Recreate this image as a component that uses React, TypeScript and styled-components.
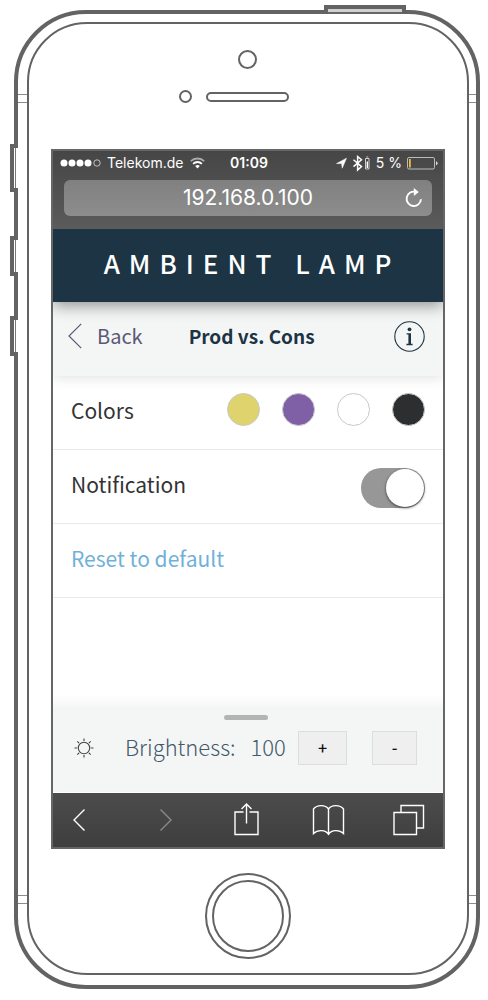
import React, { useState } from "react";
import styled, { createGlobalStyle } from "styled-components";

const line = "#636363";
const sans = `"Noto Sans CJK SC", "Noto Sans", sans-serif`;
const system = `Inter, "Liberation Sans", sans-serif`;

const GlobalStyle = createGlobalStyle`
  * { box-sizing: border-box; }
  body { margin: 0; background: #fff; font-family: ${sans}; }
  button, input { font: inherit; margin: 0; }
`;

const Phone = styled.div`
  position: relative;
  margin: 10px 8px 11px 14px;
  padding: 8px 7px 10px 9px;
  border: 4px solid ${line};
  border-radius: 72px;
  background: #fff;
`;

const Face = styled.div`
  border: 2px solid ${line};
  border-radius: 60px;
`;

const SideKey = styled.span<{ $top: number; $height: number }>`
  position: absolute;
  left: -8px;
  top: ${(p) => p.$top}px;
  width: 8px;
  height: ${(p) => p.$height}px;
  border: 4px solid ${line};
  border-right: 0;
  background: linear-gradient(90deg, #fff 1px, #777 1px, #777 2px, #fff 2px);
  background-clip: padding-box;
`;

const PowerKey = styled.span`
  position: absolute;
  right: 70px;
  top: -9px;
  width: 82px;
  height: 9px;
  border: 4px solid ${line};
  border-bottom: 0;
  background: linear-gradient(#d0d0d0 3px, #666 3px);
  background-clip: padding-box;
`;

const Band = styled.span<{ $side: "left" | "right"; $low?: boolean }>`
  position: absolute;
  ${(p) => p.$side}: 0;
  ${(p) => (p.$low ? "bottom: 81px" : "top: 80px")};
  width: ${(p) => (p.$side === "left" ? 9 : 7)}px;
  height: 9px;
  border: solid #8a8a8a;
  border-width: 1px 0;
`;

const Forehead = styled.div`
  display: flex;
  flex-direction: column;
  align-items: center;
  height: 125px;
  padding: 26px 2px 0 0;
`;

const Camera = styled.span`
  width: 19px;
  height: 19px;
  border: 2px solid ${line};
  border-radius: 50%;
`;

const Earpiece = styled.div`
  display: grid;
  grid-template-columns: 1fr auto 1fr;
  align-items: center;
  width: 100%;
  margin-top: 21px;
`;

const Sensor = styled.span`
  justify-self: end;
  width: 13px;
  height: 13px;
  margin-right: 14px;
  border: 2px solid ${line};
  border-radius: 50%;
`;

const Speaker = styled.span`
  width: 83px;
  height: 10px;
  border: 2px solid ${line};
  border-radius: 5px;
`;

const Chin = styled.div`
  display: flex;
  justify-content: center;
  padding: 24px 0 14px;
`;

const HomeButton = styled.button`
  display: flex;
  width: 86px;
  height: 86px;
  padding: 5px;
  border: 2px solid ${line};
  border-radius: 50%;
  background: #fff;
  &::before {
    content: "";
    flex: 1;
    align-self: stretch;
    border: 2px solid ${line};
    border-radius: 50%;
  }
`;

const Screen = styled.div`
  display: flex;
  flex-direction: column;
  margin: 0 22px;
  border: 2px solid #666;
  background: #fff;
`;

const Browser = styled.div`
  padding: 0 11px 13px;
  background: linear-gradient(#464646, #5b5b5b);
  color: #fff;
  font-family: ${system};
`;

const StatusBar = styled.div`
  display: grid;
  grid-template-columns: 1fr auto 1fr;
  align-items: center;
  height: 24px;
  margin: 0 -6px 5px -4px;
  font-size: 14px;
  line-height: 24px;
`;

const StatusGroup = styled.div<{ $end?: boolean }>`
  display: flex;
  align-items: center;
  justify-content: ${(p) => (p.$end ? "flex-end" : "flex-start")};
  gap: ${(p) => (p.$end ? 5 : 7)}px;
  white-space: nowrap;
`;

const Clock = styled.span`
  font-weight: 600;
`;

const AddressBar = styled.div`
  display: grid;
  grid-template-columns: 36px 1fr 36px;
  align-items: center;
  height: 36px;
  border-radius: 6px;
  background: linear-gradient(#808080, #8d8d8d);
`;

const Address = styled.input`
  grid-column: 2;
  min-width: 0;
  width: 100%;
  padding: 0;
  border: 0;
  background: none;
  color: #fff;
  font-size: 21px;
  line-height: 24px;
  text-align: center;
  outline: 0;
`;

const PlainButton = styled.button`
  display: flex;
  align-items: center;
  justify-content: center;
  padding: 0;
  border: 0;
  background: none;
  color: inherit;
`;

const Brand = styled.header`
  position: relative;
  z-index: 2;
  display: flex;
  align-items: center;
  justify-content: center;
  height: 73px;
  padding-bottom: 6px;
  background: #1c3444;
  box-shadow: 0 4px 14px rgba(0, 0, 0, 0.4);
  clip-path: inset(0 0 -30px 0);
`;

const BrandName = styled.h1`
  margin: 0;
  padding-left: 8px;
  color: #fff;
  font-size: 26px;
  font-weight: 500;
  line-height: 36px;
  letter-spacing: 9px;
  white-space: nowrap;
`;

const SubHeader = styled.nav`
  display: flex;
  align-items: center;
  height: 74px;
  padding: 0 18px 6px 15px;
  background: #f4f6f6;
  box-shadow: 0 2px 12px rgba(0, 0, 0, 0.12);
  clip-path: inset(0 0 -20px 0);
`;

const BackLink = styled.a`
  display: flex;
  align-items: center;
  gap: 15px;
  color: #5b5876;
  font-size: 20px;
  font-weight: 400;
  line-height: 30px;
  text-decoration: none;
`;

const PageTitle = styled.h2`
  margin: 0 auto 0 46px;
  color: #1c3444;
  font-size: 19px;
  font-weight: 700;
  line-height: 30px;
  white-space: nowrap;
`;

const Row = styled.div`
  display: flex;
  align-items: center;
  justify-content: space-between;
  height: 74px;
  padding: 0 18px 6px;
  border-bottom: 1px solid #e9e9e9;
  color: #333;
  font-size: 21px;
  line-height: 30px;
`;

const Swatches = styled.div`
  display: flex;
  gap: 22px;
`;

const Swatch = styled.button<{ $color: string }>`
  width: 33px;
  height: 33px;
  padding: 0;
  border: 1px solid #c9c9c9;
  border-radius: 50%;
  background: ${(p) => p.$color};
`;

const Toggle = styled.input`
  appearance: none;
  display: flex;
  width: 64px;
  height: 40px;
  margin-top: 8px;
  padding: 1px;
  border-radius: 20px;
  background: #979797;
  &::before {
    content: "";
    width: 38px;
    height: 38px;
    border-radius: 50%;
    background: #fff;
    box-shadow: 0 1px 3px rgba(0, 0, 0, 0.6);
  }
  &:checked::before {
    margin-left: auto;
  }
`;

const ResetLink = styled.a`
  color: #70b1d9;
  text-decoration: none;
`;

const Filler = styled.div`
  flex: 1;
  min-height: 109px;
  background: linear-gradient(#fff, #fff calc(100% - 12px), #f6f6f6);
`;

const Panel = styled.section`
  display: flex;
  flex-direction: column;
  align-items: center;
  height: 86px;
  padding: 8px 26px 0 21px;
  border-bottom: 1px solid #fff;
  background: #f4f6f6;
`;

const Handle = styled.span`
  width: 44px;
  height: 5px;
  border-radius: 3px;
  background: #b3b5b5;
`;

const BrightnessRow = styled.div`
  display: flex;
  align-items: center;
  width: 100%;
  margin-top: 11px;
  color: #43596b;
  font-size: 22px;
  font-weight: 300;
  line-height: 30px;
`;

const BrightnessText = styled.output`
  display: flex;
  gap: 15px;
  margin: 0 auto 0 31px;
  padding-bottom: 4px;
`;

const StepButton = styled.button<{ $width: number }>`
  width: ${(p) => p.$width}px;
  height: 34px;
  padding: 0 0 3px;
  border: 1px solid #dcdddd;
  background: #efefef;
  color: #111;
  font-size: 16px;
  font-weight: 500;
  line-height: 30px;
  & + & {
    margin-left: 25px;
  }
`;

const Toolbar = styled.footer`
  display: flex;
  align-items: center;
  justify-content: space-between;
  height: 54px;
  padding: 0 18px 0 11px;
  background: linear-gradient(#4c4c4c, #3e3e3e);
  color: #fff;
`;

const Signal = () => (
  <svg width="40" height="8" viewBox="0 0 40 8" overflow="visible" fill="#fff">
    {[4, 12, 20, 28].map((x) => (
      <circle key={x} cx={x} cy="4" r="3.5" />
    ))}
    <circle cx="37" cy="4" r="3.2" fill="none" stroke="#ddd" strokeWidth="0.8" />
  </svg>
);

const Wifi = () => (
  <svg width="15" height="12" viewBox="0 0 15 12" fill="none" stroke="#fff" strokeWidth="1.8">
    <path d="M0.8 4.2a9.6 9.6 0 0 1 13.4 0" opacity="0.55" />
    <path d="M3.1 6.8a6.3 6.3 0 0 1 8.8 0" />
    <path d="M7.5 11.5 5.2 9a3.3 3.3 0 0 1 4.6 0z" fill="#fff" stroke="none" />
  </svg>
);

const StatusIcons = () => (
  <svg width="36" height="18" viewBox="0 0 36 18">
    <path d="M1.5 9.6 11.5 4.2 7.2 14.2 6.6 9.6z" fill="#fff" stroke="#fff" strokeWidth="0.5" />
    <path d="M18.5 5.8 26.5 12.6 22.6 16V2.5L26.5 5.8 18.5 12.6" fill="none" stroke="#fff" strokeWidth="1.5" />
    <path d="M30.5 4.5h3.5v10.5h-3.5z M31.3 3h2" fill="none" stroke="#ddd" strokeWidth="0.9" />
    <path d="M31.6 7.5h1.4v6.5h-1.4z" fill="#fff" />
  </svg>
);

const Battery = () => (
  <svg width="31" height="13" viewBox="0 0 31 13">
    <rect x="0.5" y="0.5" width="27" height="11.5" rx="1.5" fill="none" stroke="#bbb" />
    <path d="M2 2h1.8v8.5H2z" fill="#f0b840" />
    <path d="M29 4.2q1.6 0.4 1.6 2t-1.6 2z" fill="#ddd" />
  </svg>
);

const Reload = () => (
  <svg width="18" height="20" viewBox="0 0 18 20">
    <path d="M10.5 3.8A7.2 7.2 0 1 0 16 11.3" fill="none" stroke="#fff" strokeWidth="1.9" />
    <path d="M8.8 0 13.8 4 8.8 8z" fill="#fff" />
  </svg>
);

const BackChevron = () => (
  <svg width="14" height="26" viewBox="0 0 14 26" fill="none" stroke="currentColor" strokeWidth="1.2">
    <path d="M13.2 0.8 1 13l12.2 12.2" />
  </svg>
);

const InfoIcon = () => (
  <svg width="31" height="31" viewBox="0 0 31 31">
    <circle cx="15.5" cy="15.5" r="14.7" fill="none" stroke="#1c3444" strokeWidth="1.1" />
    <circle cx="15.5" cy="8.3" r="1.9" fill="#1c3444" />
    <path d="M12.6 12.2h4.4v10.6h1.6v1.4h-6.2v-1.4h2V13.6h-1.8z" fill="#1c3444" />
  </svg>
);

const Sun = () => (
  <svg width="20" height="20" viewBox="0 0 20 20" fill="none" stroke="#444" strokeWidth="1.1">
    <circle cx="10" cy="10" r="5.7" />
    <path d="M10 0.5v2.6M10 16.9v2.6M0.5 10h2.6M16.9 10h2.6M3.3 3.3l1.8 1.8M14.9 14.9l1.8 1.8M3.3 16.7l1.8-1.8M14.9 5.1l1.8-1.8" />
  </svg>
);

const ToolIcon = ({ d, dim }: { d: string; dim?: boolean }) => (
  <svg
    width="32"
    height="34"
    viewBox="0 0 32 34"
    overflow="visible"
    fill="none"
    stroke={dim ? "#8a8a8a" : "#fff"}
    strokeWidth="1.4"
  >
    <path d={d} />
  </svg>
);

const tools = [
  { label: "Previous page", d: "M20.5 6.5 10 17l10.5 10.5" },
  { label: "Next page", d: "M14.5 6.5 25 17 14.5 27.5", dim: true },
  { label: "Share", d: "M14.5 9H6v22.5h23V9h-8.5M17.5 20.5V1M12.5 6l5-5 5 5" },
  {
    label: "Bookmarks",
    d: "M17.5 31V6C14.5 1.5 6 1.5 2.5 6v24.5c4-4 12-4 15 0.8 3-4.8 11-4.8 15-0.8V6C29 1.5 20.5 1.5 17.5 6",
  },
  { label: "Tabs", d: "M1 9.5h22.5v22H1z M8 9V2.5h22.5V25H24" },
];

export default function App() {
  const [level, setLevel] = useState(100);
  const [notify, setNotify] = useState(true);

  return (
    <>
      <GlobalStyle />
      <Phone>
        <PowerKey />
        <SideKey $top={130} $height={48} />
        <SideKey $top={222} $height={40} />
        <SideKey $top={302} $height={40} />
        <Band $side="left" />
        <Band $side="right" />
        <Band $side="left" $low />
        <Band $side="right" $low />
        <Face>
          <Forehead>
            <Camera />
            <Earpiece>
              <Sensor />
              <Speaker />
            </Earpiece>
          </Forehead>
          <Screen>
            <Browser>
              <StatusBar>
                <StatusGroup>
                  <Signal />
                  <span>Telekom.de</span>
                  <Wifi />
                </StatusGroup>
                <Clock>01:09</Clock>
                <StatusGroup $end>
                  <StatusIcons />
                  <span>5 %</span>
                  <Battery />
                </StatusGroup>
              </StatusBar>
              <AddressBar>
                <Address aria-label="Address" defaultValue="192.168.0.100" />
                <PlainButton aria-label="Reload">
                  <Reload />
                </PlainButton>
              </AddressBar>
            </Browser>
            <Brand>
              <BrandName>AMBIENT LAMP</BrandName>
            </Brand>
            <SubHeader>
              <BackLink href="#back">
                <BackChevron />
                Back
              </BackLink>
              <PageTitle>Prod vs. Cons</PageTitle>
              <PlainButton aria-label="Info">
                <InfoIcon />
              </PlainButton>
            </SubHeader>
            <Row>
              <span>Colors</span>
              <Swatches>
                <Swatch $color="#ded36c" aria-label="Yellow" />
                <Swatch $color="#7f5fa6" aria-label="Purple" />
                <Swatch $color="#ffffff" aria-label="White" />
                <Swatch $color="#2d2e30" aria-label="Black" />
              </Swatches>
            </Row>
            <Row>
              <label htmlFor="notification">Notification</label>
              <Toggle
                id="notification"
                type="checkbox"
                checked={notify}
                onChange={(e) => setNotify(e.target.checked)}
              />
            </Row>
            <Row>
              <ResetLink href="#reset">Reset to default</ResetLink>
            </Row>
            <Filler />
            <Panel>
              <Handle />
              <BrightnessRow>
                <Sun />
                <BrightnessText>
                  <span>Brightness:</span>
                  <span>{level}</span>
                </BrightnessText>
                <StepButton $width={49} aria-label="Increase" onClick={() => setLevel(Math.min(100, level + 1))}>
                  +
                </StepButton>
                <StepButton $width={45} aria-label="Decrease" onClick={() => setLevel(Math.max(0, level - 1))}>
                  -
                </StepButton>
              </BrightnessRow>
            </Panel>
            <Toolbar>
              {tools.map((t) => (
                <PlainButton key={t.label} aria-label={t.label}>
                  <ToolIcon d={t.d} dim={t.dim} />
                </PlainButton>
              ))}
            </Toolbar>
          </Screen>
          <Chin>
            <HomeButton aria-label="Home" />
          </Chin>
        </Face>
      </Phone>
    </>
  );
}
